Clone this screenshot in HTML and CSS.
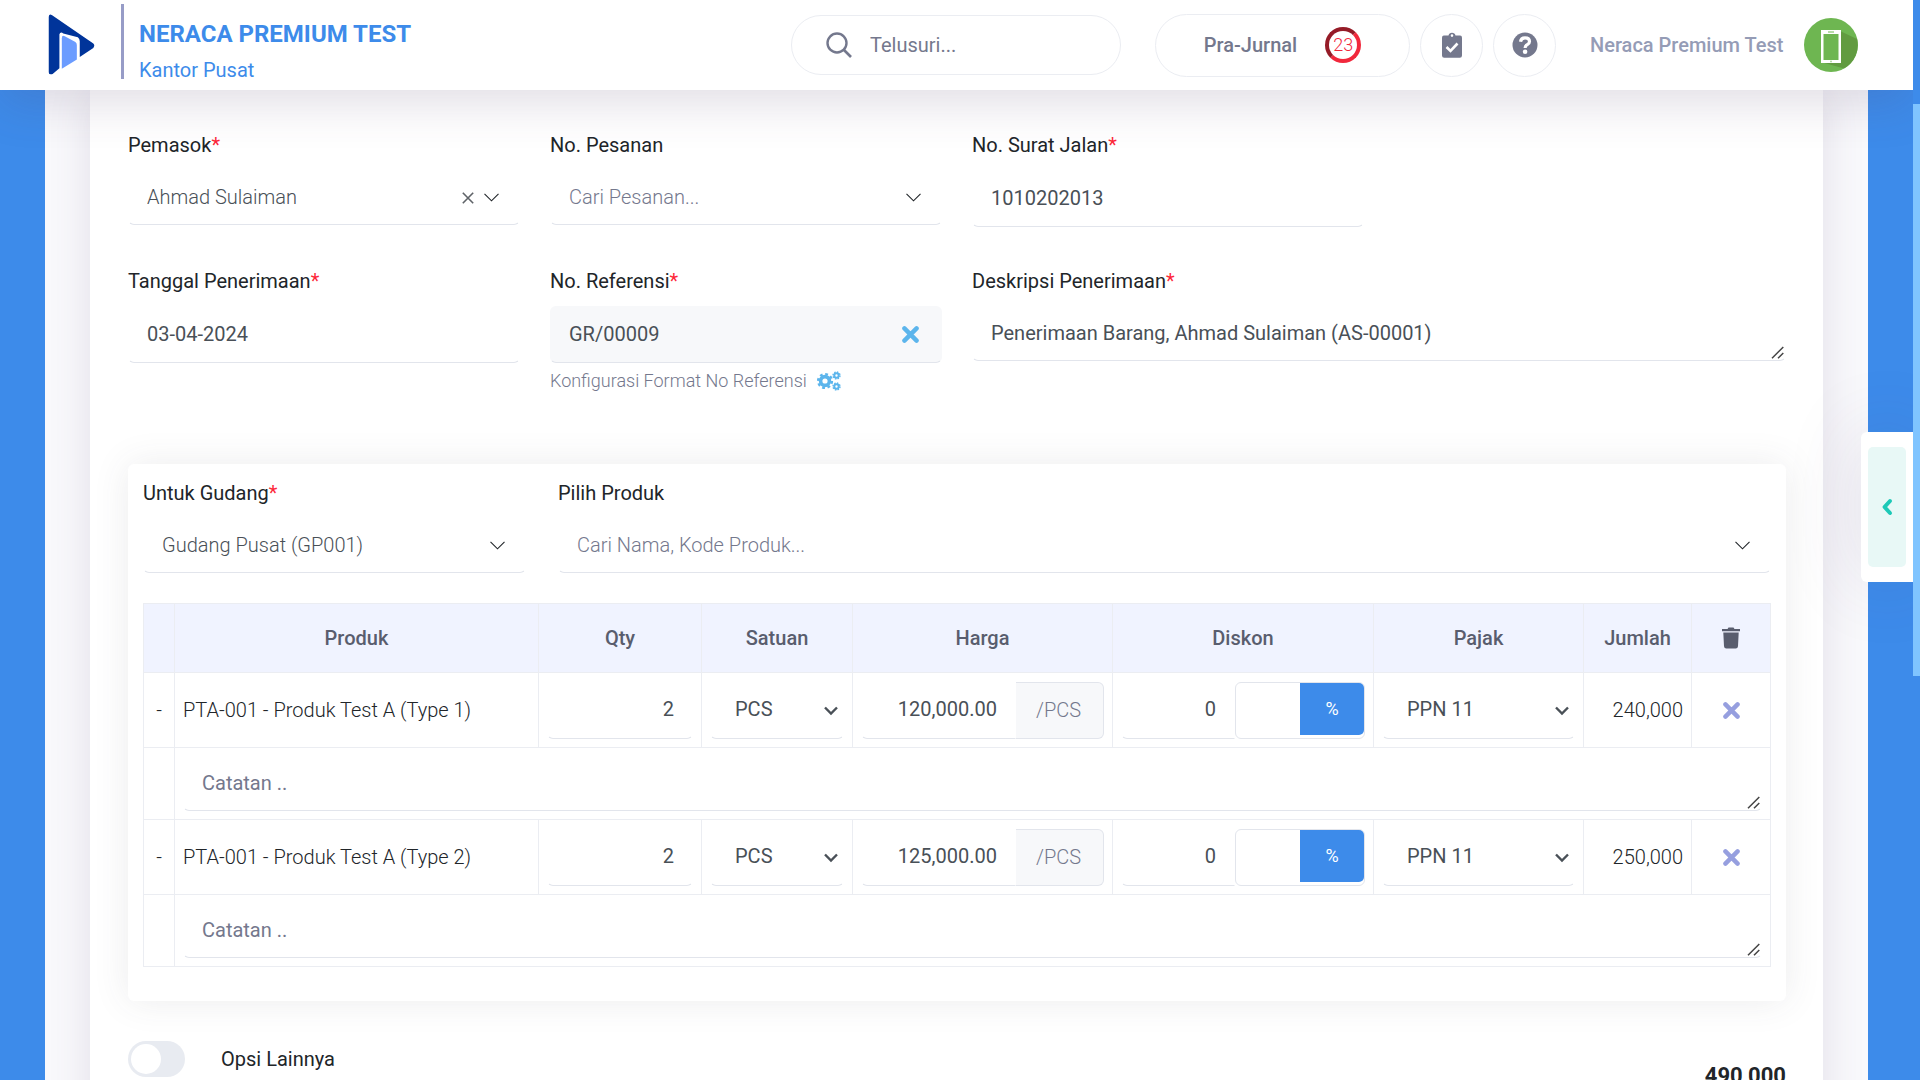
FILE: index.html
```html
<!DOCTYPE html>
<html lang="id">
<head>
    <meta charset="UTF-8">
    <meta name="viewport" content="width=device-width, initial-scale=1.0">
    <title>Penerimaan Barang</title>
    <link rel="stylesheet" href="styles.css">
</head>
<body>

    <!-- Shared icons -->
    <svg class="icon-defs" aria-hidden="true">
        <symbol id="chevron-thin" viewBox="0 0 15 9">
            <path d="M.5.8l7 7 7-7" fill="none" stroke="currentColor" stroke-width="1.1"/>
        </symbol>
        <symbol id="chevron" viewBox="0 0 14 10">
            <path d="M1 1.5l6 6 6-6" fill="none" stroke="currentColor" stroke-width="2.4"/>
        </symbol>
        <symbol id="cross" viewBox="0 0 16 16">
            <path d="M2.3 2.3l11.4 11.4M13.7 2.3L2.3 13.7" fill="none" stroke="currentColor" stroke-width="4.2" stroke-linecap="round"/>
        </symbol>
        <symbol id="grip" viewBox="0 0 13 13">
            <path d="M1 12.3L12.3 1M7 12.3l5.3-5.3" fill="none" stroke="currentColor" stroke-width="1.5"/>
        </symbol>
    </svg>

    <header class="topbar">
        <a class="brand" href="#" aria-label="Beranda">
            <svg class="logo" viewBox="0 0 48 64">
                <path d="M3.500 1.200L46 30.500q2 2 0 4.500L32 44.500V28q0-2.500-2-4L15 20q-3-2-4 1v35L4 62q-4 1-4-2V3q0-4 3.500-1.800z" fill="#00349a"/>
                <path d="M13.500 25q0-3.500 3-2l11 6q1.500 1 1.500 3v15L13.500 56.500z" fill="#6b9cff"/>
            </svg>
        </a>
        <div class="company">
            <h1>NERACA PREMIUM TEST</h1>
            <p>Kantor Pusat</p>
        </div>
        <label class="search">
            <svg viewBox="0 0 26 26"><circle cx="11" cy="11" r="9.500" fill="none" stroke="currentColor" stroke-width="2.400"/><path d="M18 18l7 7" stroke="currentColor" stroke-width="2.600"/></svg>
            <input type="search" placeholder="Telusuri..." aria-label="Telusuri">
        </label>
        <button class="pill" type="button">
            Pra-Jurnal
            <span class="badge">23</span>
        </button>
        <button class="round-button" type="button" aria-label="Tugas">
            <svg class="clipboard" viewBox="0 0 20 26">
                <path fill="currentColor" fill-rule="evenodd" d="M2.500 3.500H6.500a3.600 3.600 0 0 1 7 0h4A2.200 2.200 0 0 1 20 5.700v17.800a2.200 2.200 0 0 1-2.200 2.200H2.200A2.200 2.200 0 0 1 0 23.500V5.700a2.200 2.200 0 0 1 2.500-2.200zM10 2.300a1.300 1.300 0 1 0 0 2.600 1.300 1.300 0 0 0 0-2.600z"/>
                <path d="M4.500 15l4 4 7-7.500" fill="none" stroke="#fff" stroke-width="2.600"/>
            </svg>
        </button>
        <button class="round-button" type="button" aria-label="Bantuan">
            <svg viewBox="0 0 26 26">
                <circle cx="13" cy="13" r="12.500" fill="currentColor"/>
                <path d="M8.500 9.800Q9 5.800 13 5.800q4.500 0 4.500 3.700 0 2-2.200 3.200-2.200 1.200-2.200 3.200" fill="none" stroke="#fff" stroke-width="3.200"/>
                <circle cx="13.100" cy="19.800" r="2.300" fill="#fff"/>
            </svg>
        </button>
        <a class="user" href="#">
            <span>Neraca Premium Test</span>
            <svg viewBox="0 0 54 54">
                <circle cx="27" cy="27" r="27" fill="#6eb651"/>
                <path d="M36 13l17 8a27 27 0 0 1-13 29.500L17 44z" fill="#619b40"/>
                <path d="M17 12h20v33H17z" fill="#fff"/>
                <path d="M19.500 16h15v26h-15z" fill="#6eb651"/>
                <path d="M24 14h6M27 42.700v1.600" stroke="#6eb651"/>
            </svg>
        </a>
    </header>

    <div class="wrapper">
        <main class="card">
            <form class="receipt-form">
                <div class="field">
                    <label for="supplier">Pemasok<i>*</i></label>
                    <div class="control">
                        <select id="supplier" class="chosen"><option>Ahmad Sulaiman</option></select>
                        <button class="clear-button" type="button" aria-label="Hapus pemasok">
                            <svg viewBox="0 0 12 12"><path d="M.8.800l10.400 10.400M11.200.8L.8 11.200" stroke="currentColor" stroke-width="1.600"/></svg>
                        </button>
                        <svg class="arrow"><use href="#chevron-thin"/></svg>
                    </div>
                </div>
                <div class="field">
                    <label for="order">No. Pesanan</label>
                    <div class="control">
                        <select id="order" class="empty"><option>Cari Pesanan...</option></select>
                        <svg class="arrow"><use href="#chevron-thin"/></svg>
                    </div>
                </div>
                <div class="field">
                    <label for="delivery">No. Surat Jalan<i>*</i></label>
                    <input id="delivery" type="text" value="1010202013">
                </div>
                <div class="field first">
                    <label for="date">Tanggal Penerimaan<i>*</i></label>
                    <input id="date" type="text" value="03-04-2024">
                </div>
                <div class="field">
                    <label for="reference">No. Referensi<i>*</i></label>
                    <div class="control">
                        <input id="reference" class="locked" type="text" value="GR/00009" readonly>
                        <button class="reset-button" type="button" aria-label="Hapus referensi"><svg><use href="#cross"/></svg></button>
                    </div>
                    <a class="config-link" href="#">
                        Konfigurasi Format No Referensi
                        <svg viewBox="0 0 24 20">
                            <g fill="none" stroke="currentColor">
                                <circle cx="8" cy="10" r="4.400" stroke-width="3.600"/>
                                <circle cx="8" cy="10" r="6.900" stroke-width="2.400" stroke-dasharray="2.800 2.619"/>
                                <circle cx="19.500" cy="4.500" r="2.200" stroke-width="2"/>
                                <circle cx="19.500" cy="4.500" r="3.500" stroke-width="1.400" stroke-dasharray="1.500 1.249"/>
                                <circle cx="19.500" cy="15.500" r="2.200" stroke-width="2"/>
                                <circle cx="19.500" cy="15.500" r="3.500" stroke-width="1.400" stroke-dasharray="1.500 1.249"/>
                            </g>
                        </svg>
                    </a>
                </div>
                <div class="field wide">
                    <label for="description">Deskripsi Penerimaan<i>*</i></label>
                    <div class="control">
                        <textarea id="description" rows="1">Penerimaan Barang, Ahmad Sulaiman (AS-00001)</textarea>
                        <svg class="grip"><use href="#grip"/></svg>
                    </div>
                </div>
            </form>

            <section class="products">
                <div class="product-filter">
                    <div class="field">
                        <label for="warehouse">Untuk Gudang<i>*</i></label>
                        <div class="control">
                            <select id="warehouse" class="chosen"><option>Gudang Pusat (GP001)</option></select>
                            <svg class="arrow"><use href="#chevron-thin"/></svg>
                        </div>
                    </div>
                    <div class="field product-search">
                        <label for="product">Pilih Produk</label>
                        <div class="control">
                            <select id="product" class="empty"><option>Cari Nama, Kode Produk...</option></select>
                            <svg class="arrow"><use href="#chevron-thin"/></svg>
                        </div>
                    </div>
                </div>

                <table>
                    <colgroup>
                        <col class="col-mark">
                        <col>
                        <col class="col-qty">
                        <col class="col-unit">
                        <col class="col-price">
                        <col class="col-discount">
                        <col class="col-tax">
                        <col class="col-total">
                        <col class="col-delete">
                    </colgroup>
                    <thead>
                        <tr>
                            <th></th>
                            <th>Produk</th>
                            <th>Qty</th>
                            <th>Satuan</th>
                            <th>Harga</th>
                            <th>Diskon</th>
                            <th>Pajak</th>
                            <th>Jumlah</th>
                            <th>
                                <svg class="trash" viewBox="0 0 18 22" aria-label="Hapus">
                                    <path fill="currentColor" d="M0 2h5.500l1-1.500h5l1 1.500H18v2.200H0zM1.300 5.500h15.400l-.7 13.700q-.2 2.300-2.300 2.300H4.300Q2.200 21.500 2 19.200z"/>
                                </svg>
                            </th>
                        </tr>
                    </thead>
                    <tbody>
                        <tr class="item">
                            <td class="mark">-</td>
                            <td>PTA-001 - Produk Test A (Type 1)</td>
                            <td><input class="number" type="text" value="2" aria-label="Qty"></td>
                            <td>
                                <div class="control">
                                    <select aria-label="Satuan"><option>PCS</option></select>
                                    <svg class="arrow"><use href="#chevron"/></svg>
                                </div>
                            </td>
                            <td>
                                <div class="group">
                                    <input class="number" type="text" value="120,000.00" aria-label="Harga">
                                    <span class="suffix">/PCS</span>
                                </div>
                            </td>
                            <td>
                                <div class="group">
                                    <input class="number" type="text" value="0" aria-label="Diskon">
                                    <div class="percent"><button type="button">%</button></div>
                                </div>
                            </td>
                            <td>
                                <div class="control">
                                    <select aria-label="Pajak"><option>PPN 11</option></select>
                                    <svg class="arrow"><use href="#chevron"/></svg>
                                </div>
                            </td>
                            <td class="amount">240,000</td>
                            <td class="mark"><button class="delete-button" type="button" aria-label="Hapus baris"><svg><use href="#cross"/></svg></button></td>
                        </tr>
                        <tr>
                            <td></td>
                            <td colspan="8">
                                <div class="control">
                                    <textarea rows="1" placeholder="Catatan .." aria-label="Catatan"></textarea>
                                    <svg class="grip"><use href="#grip"/></svg>
                                </div>
                            </td>
                        </tr>
                        <tr class="item">
                            <td class="mark">-</td>
                            <td>PTA-001 - Produk Test A (Type 2)</td>
                            <td><input class="number" type="text" value="2" aria-label="Qty"></td>
                            <td>
                                <div class="control">
                                    <select aria-label="Satuan"><option>PCS</option></select>
                                    <svg class="arrow"><use href="#chevron"/></svg>
                                </div>
                            </td>
                            <td>
                                <div class="group">
                                    <input class="number" type="text" value="125,000.00" aria-label="Harga">
                                    <span class="suffix">/PCS</span>
                                </div>
                            </td>
                            <td>
                                <div class="group">
                                    <input class="number" type="text" value="0" aria-label="Diskon">
                                    <div class="percent"><button type="button">%</button></div>
                                </div>
                            </td>
                            <td>
                                <div class="control">
                                    <select aria-label="Pajak"><option>PPN 11</option></select>
                                    <svg class="arrow"><use href="#chevron"/></svg>
                                </div>
                            </td>
                            <td class="amount">250,000</td>
                            <td class="mark"><button class="delete-button" type="button" aria-label="Hapus baris"><svg><use href="#cross"/></svg></button></td>
                        </tr>
                        <tr>
                            <td></td>
                            <td colspan="8">
                                <div class="control">
                                    <textarea rows="1" placeholder="Catatan .." aria-label="Catatan"></textarea>
                                    <svg class="grip"><use href="#grip"/></svg>
                                </div>
                            </td>
                        </tr>
                    </tbody>
                </table>
            </section>

            <footer class="summary">
                <label class="switch">
                    <input type="checkbox">
                    Opsi Lainnya
                </label>
                <strong>490,000</strong>
            </footer>
        </main>
    </div>

    <!-- Side panel toggle -->
    <div class="side-tab">
        <button type="button" aria-label="Buka panel">
            <svg viewBox="0 0 12 18"><path d="M9 3L3.500 9 9 15" fill="none" stroke="currentColor" stroke-width="4" stroke-linecap="round" stroke-linejoin="round"/></svg>
        </button>
    </div>

    <div class="scroll-track"><div class="scroll-thumb"></div></div>
</body>
</html>
```
FILE: styles.css
```css
* {
    box-sizing: border-box;
}

html {
    scrollbar-width: none; /* replaced by .scroll-track */
}

body {
    margin: 0;
    padding-right: 7px;
    background-color: #3d8bea;
    font-family: Roboto, "Liberation Sans", sans-serif;
    font-size: 20px;
    font-weight: 300;
    line-height: 30px;
    color: #212529;
}

button,
input,
select,
textarea {
    font: inherit;
    margin: 0;
}

button {
    padding: 0;
    border: none;
    background: none;
    cursor: pointer;
}

a {
    color: inherit;
    text-decoration: none;
}

svg {
    display: block;
}

.icon-defs {
    position: absolute;
    width: 0;
    height: 0;
}

/* Top bar */
.topbar {
    position: sticky;
    top: 0;
    z-index: 2;
    display: flex;
    align-items: center;
    height: 90px;
    padding: 0 55px 0 48px;
    background-color: #fff;
    box-shadow: 0 15px 45px rgba(82, 63, 105, 0.17);
}

.logo {
    width: 48px;
    height: 62px;
}

.company {
    align-self: flex-start;
    margin: 4px auto 0 25px;
    padding-left: 15px;
    height: 75px;
    border-left: 3px solid #979cc7;
    color: #3d8bea;
    font-weight: 400;
}

.company h1 {
    margin: 0 0 9px;
    padding-top: 15px;
    font-size: 24px;
    font-weight: 700;
    line-height: 30px;
}

.company p {
    margin: 0;
    line-height: 24px;
}

.search {
    display: flex;
    align-items: center;
    gap: 18px;
    width: 330px;
    height: 60px;
    margin-right: 34px;
    padding: 0 34px;
    border: 1px solid #ebedf2;
    border-radius: 30px;
    color: #74788d;
}

.search svg {
    flex: none;
    width: 26px;
    height: 26px;
}

.search input {
    height: auto;
    padding: 0;
    border: none;
    color: #74788d;
}

.pill,
.round-button {
    display: flex;
    align-items: center;
    justify-content: center;
    height: 63px;
    margin-right: 10px;
    border: 1px solid #ebedf2;
    border-radius: 32px;
    color: #74788d;
}

.pill {
    gap: 28px;
    width: 255px;
    font-weight: 500;
}

.badge {
    width: 36px;
    height: 36px;
    border: 4px solid #f1283c;
    border-top-color: #951b27;
    border-left-color: #951b27;
    border-radius: 50%;
    color: #f1283c;
    font-size: 18px;
    font-weight: 300;
    line-height: 28px;
}

.round-button {
    width: 63px;
}

.round-button svg {
    width: 26px;
    height: 26px;
}

.user {
    display: flex;
    align-items: center;
    gap: 16px;
    margin-left: 24px;
    color: #959cb6;
    font-weight: 500;
}

.user span {
    min-width: 198px;
}

.user svg {
    width: 54px;
    height: 54px;
}

/* Page body */
.wrapper {
    margin: 0 45px;
    padding: 0 45px;
    background-color: #f9f9fc;
}

.card {
    padding: 40px 37px 60px 38px;
    background-color: #fff;
    box-shadow: 0 0 40px rgba(82, 63, 105, 0.14);
}

.receipt-form {
    display: grid;
    grid-template-columns: repeat(4, 1fr);
    gap: 39px 30px;
}

.field label {
    display: block;
    margin-bottom: 10px;
    font-weight: 400;
}

.field i {
    color: #fd2739;
    font-style: normal;
}

.first {
    grid-column: 1;
}

.wide {
    grid-column: span 2;
}

.control {
    position: relative;
}

input,
select,
textarea {
    display: block;
    width: 100%;
    height: 57px;
    padding: 0 18px 2px;
    border: 1px solid transparent;
    border-bottom-color: #e2e5ec;
    border-radius: 6px;
    outline: none;
    background-color: transparent;
    color: #495057;
    font-weight: 400;
}

select {
    appearance: none;
}

.field select,
textarea {
    height: 55px;
}

textarea {
    padding-top: 11px;
    overflow: hidden;
    resize: none;
}

::placeholder {
    color: #74788d;
    opacity: 1;
}

.field .chosen {
    font-weight: 300;
}

.field .empty {
    color: #74788d;
    font-weight: 300;
}

.locked {
    background-color: #f7f8fa;
}

/* Icons lying over the controls */
.arrow,
.clear-button,
.reset-button,
.grip {
    position: absolute;
}

.arrow,
.grip {
    pointer-events: none;
}

.arrow {
    top: 23px;
    right: 21px;
    width: 15px;
    height: 9px;
}

.clear-button {
    top: 22px;
    right: 46px;
    color: #5f6368;
}

.clear-button svg {
    width: 12px;
    height: 12px;
}

.reset-button {
    top: 20px;
    right: 23px;
    color: #5cb5ec;
}

.reset-button svg,
.delete-button svg {
    width: 17px;
    height: 17px;
}

.grip {
    right: 2px;
    bottom: 2px;
    width: 13px;
    height: 13px;
    color: #444;
}

.config-link {
    display: flex;
    align-items: center;
    gap: 10px;
    margin-top: 4px;
    color: #74788d;
    font-size: 18px;
    line-height: 28px;
}

.config-link svg {
    width: 24px;
    height: 20px;
    color: #5cb5ec;
}

/* Product list */
.products {
    margin-top: 69px;
    padding: 14px 15px 34px;
    border-radius: 6px;
    box-shadow: 0 0 36px rgba(69, 65, 78, 0.1);
}

.product-filter {
    display: grid;
    grid-template-columns: repeat(4, 1fr);
    gap: 32px;
    margin-bottom: 30px;
}

.product-search {
    grid-column: span 3;
}

table {
    width: 100%;
    table-layout: fixed;
    border-collapse: collapse;
}

.col-mark {
    width: 31px;
}

.col-qty {
    width: 163px;
}

.col-unit {
    width: 151px;
}

.col-price {
    width: 260px;
}

.col-discount {
    width: 261px;
}

.col-tax {
    width: 210px;
}

.col-total {
    width: 108px;
}

.col-delete {
    width: 79px;
}

th,
td {
    padding: 8px;
    border: 1px solid #ebedf2;
    text-align: left;
}

th {
    height: 69px;
    background-color: #f0f3ff;
    color: #595d6e;
    font-weight: 500;
    text-align: center;
}

.item {
    height: 75px;
}

td .arrow {
    top: 24px;
    right: 6px;
    width: 14px;
    height: 10px;
    color: #495057;
}

td select {
    padding-left: 24px;
}

.mark {
    padding: 0;
    text-align: center;
}

.amount {
    text-align: right;
}

.number {
    text-align: right;
}

.trash {
    width: 18px;
    height: 22px;
    margin: 0 auto;
}

.delete-button {
    display: block;
    margin: 0 auto;
    color: #969fdf;
}

.group {
    display: flex;
}

.group input {
    flex: 1;
    min-width: 0;
    border-bottom-right-radius: 0;
}

.suffix {
    width: 88px;
    padding: 12px 20px;
    border: 1px solid #e2e5ec;
    border-left: none;
    border-radius: 0 6px 6px 0;
    background-color: #f7f8fa;
    color: #74788d;
}

.percent {
    display: flex;
    justify-content: flex-end;
    width: 130px;
    height: 57px;
    border: 1px solid #e2e5ec;
    border-radius: 6px;
}

.percent button {
    width: 64px;
    height: 52px;
    border-radius: 0 5px 5px 0;
    background-color: #3d8bea;
    color: #fff;
    font-size: 18px;
    font-weight: 400;
}

/* Bottom options */
.summary {
    display: flex;
    justify-content: space-between;
    margin-top: 39px;
}

.summary strong {
    padding-top: 21px;
    font-size: 22px;
    font-weight: 700;
}

.switch {
    display: flex;
    align-items: center;
    gap: 36px;
    height: 37px;
    font-weight: 400;
}

.switch input {
    appearance: none;
    width: 57px;
    height: 36px;
    padding: 3px;
    border: none;
    border-radius: 18px;
    background-color: #e8ebf1;
}

.switch input::before {
    content: "";
    display: block;
    width: 30px;
    height: 30px;
    border-radius: 50%;
    background-color: #fff;
}

.switch input:checked::before {
    margin-left: 21px;
}

/* Side panel toggle */
.side-tab {
    position: fixed;
    top: 40%;
    right: 7px;
    z-index: 1;
    padding: 15px 7px;
    border-radius: 6px 0 0 6px;
    background-color: #fff;
    box-shadow: 0 0 75px rgba(82, 63, 105, 0.15);
}

.side-tab button {
    display: flex;
    align-items: center;
    justify-content: center;
    width: 38px;
    height: 120px;
    border-radius: 5px;
    background-color: #e8f8f6;
    color: #1dc9b7;
}

.side-tab svg {
    width: 12px;
    height: 18px;
}

/* Scroll bar */
.scroll-track {
    position: fixed;
    top: 0;
    right: 0;
    bottom: 0;
    z-index: 3;
    width: 7px;
    padding-top: 104px;
    background-color: #3d8bea;
}

.scroll-thumb {
    height: 572px;
    background-color: #7fc4ff;
}
```
